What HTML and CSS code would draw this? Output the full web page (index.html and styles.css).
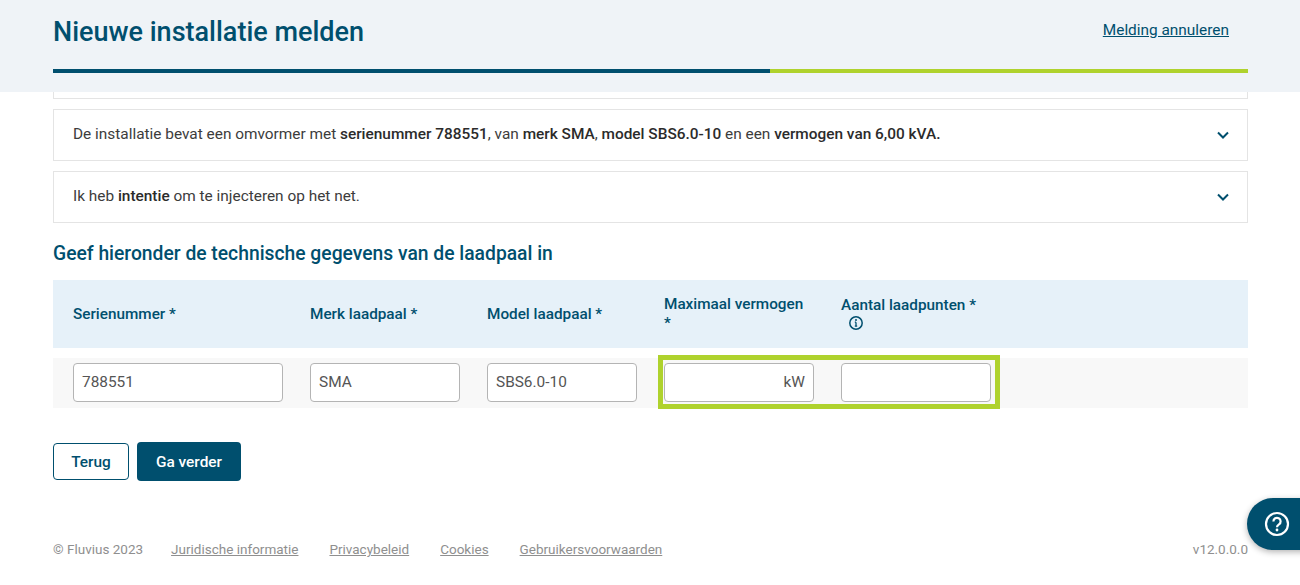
FILE: index.html
```html
<!DOCTYPE html>
<html lang="nl">
<head>
<meta charset="utf-8">
<title>Nieuwe installatie melden</title>
<link rel="stylesheet" href="styles.css">
</head>
<body>
<header class="top">
  <div class="top-row">
    <h1>Nieuwe installatie melden</h1>
    <a class="cancel" href="#">Melding annuleren</a>
  </div>
  <div class="progress"><span class="done"></span><span class="todo"></span></div>
</header>
<main class="content">
  <div class="card-stub"></div>
  <div class="card">
    <p>De installatie bevat een omvormer met <b>serienummer 788551</b>, van <b>merk SMA</b>, <b>model SBS6.0-10</b> en een <b>vermogen van 6,00 kVA.</b></p>
    <svg class="chev" viewBox="0 0 12 8" width="12" height="8"><path d="M1 1.5l5 5 5-5" fill="none" stroke="#004f6e" stroke-width="2"/></svg>
  </div>
  <div class="card">
    <p>Ik heb <b>intentie</b> om te injecteren op het net.</p>
    <svg class="chev" viewBox="0 0 12 8" width="12" height="8"><path d="M1 1.5l5 5 5-5" fill="none" stroke="#004f6e" stroke-width="2"/></svg>
  </div>
  <h2>Geef hieronder de technische gegevens van de laadpaal in</h2>
  <div class="table">
    <div class="thead">
      <div class="th c1">Serienummer *</div>
      <div class="th c2">Merk laadpaal *</div>
      <div class="th c3">Model laadpaal *</div>
      <div class="th c4">Maximaal vermogen *</div>
      <div class="th c5">Aantal laadpunten *<br>
        <svg class="info" viewBox="0 0 16 16" width="16" height="16"><circle cx="8" cy="8" r="6.2" fill="none" stroke="#004f6e" stroke-width="1.5"/><path d="M8 7.2v4M6.8 11.2h2.4M6.8 7.2H8" fill="none" stroke="#004f6e" stroke-width="1.3"/><circle cx="8" cy="5" r="1" fill="#004f6e"/></svg>
      </div>
    </div>
    <div class="tbody">
      <div class="td c1"><div class="input">788551</div></div>
      <div class="td c2"><div class="input">SMA</div></div>
      <div class="td c3"><div class="input">SBS6.0-10</div></div>
      <div class="td c4"><div class="input unit">kW</div></div>
      <div class="td c5"><div class="input"></div></div>
      <div class="highlight"></div>
    </div>
  </div>
  <div class="actions">
    <button class="btn ghost">Terug</button>
    <button class="btn solid">Ga verder</button>
  </div>
</main>
<footer class="foot">
  <span class="copy">© Fluvius 2023</span>
  <a href="#">Juridische informatie</a>
  <a href="#">Privacybeleid</a>
  <a href="#">Cookies</a>
  <a href="#">Gebruikersvoorwaarden</a>
  <span class="version">v12.0.0.0</span>
</footer>
<button class="help" aria-label="Help">
  <svg viewBox="0 0 26 26" width="26" height="26"><circle cx="13" cy="13" r="11" fill="none" stroke="#fff" stroke-width="2.2"/><path d="M9.4 10.4a3.6 3.6 0 1 1 5.6 3c-1.4.9-2 1.500-2 2.800" fill="none" stroke="#fff" stroke-width="2.200"/><circle cx="13" cy="19" r="1.400" fill="#fff"/></svg>
</button>
</body>
</html>
```
FILE: styles.css
```css
* { box-sizing: border-box; }
html, body { margin: 0; height: 585px; overflow: hidden; background: #fff; }
body { font-family: Roboto, "Liberation Sans", sans-serif; font-size: 15.4px; color: #3c3c3c; position: relative; }
.top { height: 92px; background: #eff3f7; padding: 0 52px 0 53px; }
.top-row { height: 69px; display: flex; justify-content: space-between; padding-right: 19px; }
h1 { margin: 15px 0 0; font-size: 27px; line-height: 34px; font-weight: 500; color: #004f6e; }
.cancel { margin-top: 20px; font-size: 15.4px; line-height: 20px; color: #004f6e; text-decoration: underline; }
.progress { display: flex; height: 4px; }
.done { width: 717px; background: #004f6e; }
.todo { flex: 1; background: #afd22d; }
.content { padding: 0 52px 0 53px; }
.card-stub { height: 7px; border: 1px solid #e4e4e4; border-top: 0; margin-bottom: 10px; }
.card { height: 52px; border: 1px solid #e4e4e4; margin-bottom: 10px; padding: 0 19px 2px; display: flex; align-items: center; justify-content: space-between; }
.card p { margin: 0; font-size: 15.4px; line-height: 20px; }
.card b { font-weight: 500; color: #2b2b2b; }
.chev { margin: 2px -1px 0 0; }
h2 { margin: 20px 0 15px; font-size: 19.3px; line-height: 22px; font-weight: 500; color: #004f6e; }
.thead { height: 68px; background: #e6f1f9; display: flex; align-items: center; padding-left: 20px; }
.th { font-size: 15.3px; line-height: 19px; font-weight: 500; color: #004f6e; }
.c1 { width: 237px; }
.c2 { width: 177px; }
.c3 { width: 177px; }
.c4 { width: 177px; padding-right: 27px; }
.th.c4 { padding-right: 32px; }
.c5 { width: 150px; }
.th.c5 { padding-bottom: 2px; }
.info { display: block; margin: 0 0 0 7px; }
.tbody { position: relative; margin-top: 10px; height: 50px; background: #f8f8f8; display: flex; align-items: center; padding: 0 0 2px 20px; }
.td.c1, .td.c2, .td.c3 { padding-right: 27px; }
.input { height: 39px; background: #fff; border: 1px solid #b4b4b4; border-radius: 4px; padding: 0 8px; font-size: 15.4px; line-height: 37px; color: #555; }
.unit { text-align: right; }
.highlight { position: absolute; left: 605px; top: -3px; width: 342px; height: 54px; border: 5px solid #afd22d; pointer-events: none; }
.actions { margin-top: 34px; display: flex; gap: 8px; align-items: center; }
.btn { font-family: inherit; font-size: 15.4px; font-weight: 500; border-radius: 4px; }
.ghost { width: 76px; height: 37px; background: #fff; border: 1px solid #004f6e; color: #004f6e; }
.solid { width: 104px; height: 39px; background: #004f6e; border: 0; color: #fff; }
.foot { margin-top: 60px; padding: 0 52px 0 53px; display: flex; align-items: center; font-size: 13.5px; line-height: 16px; color: #8f8f8f; }
.foot a { color: #8f8f8f; text-decoration: underline; margin-right: 31px; }
.copy { margin-right: 28px; }
.version { margin-left: auto; }
.help { position: absolute; left: 1247px; top: 498px; width: 70px; height: 52px; border: 0; padding: 0 0 0 17px; text-align: left; background: #004f6e; border-radius: 26px 0 0 26px; box-shadow: 0 2px 6px rgba(0,0,0,.3); display: flex; align-items: center; }
```
